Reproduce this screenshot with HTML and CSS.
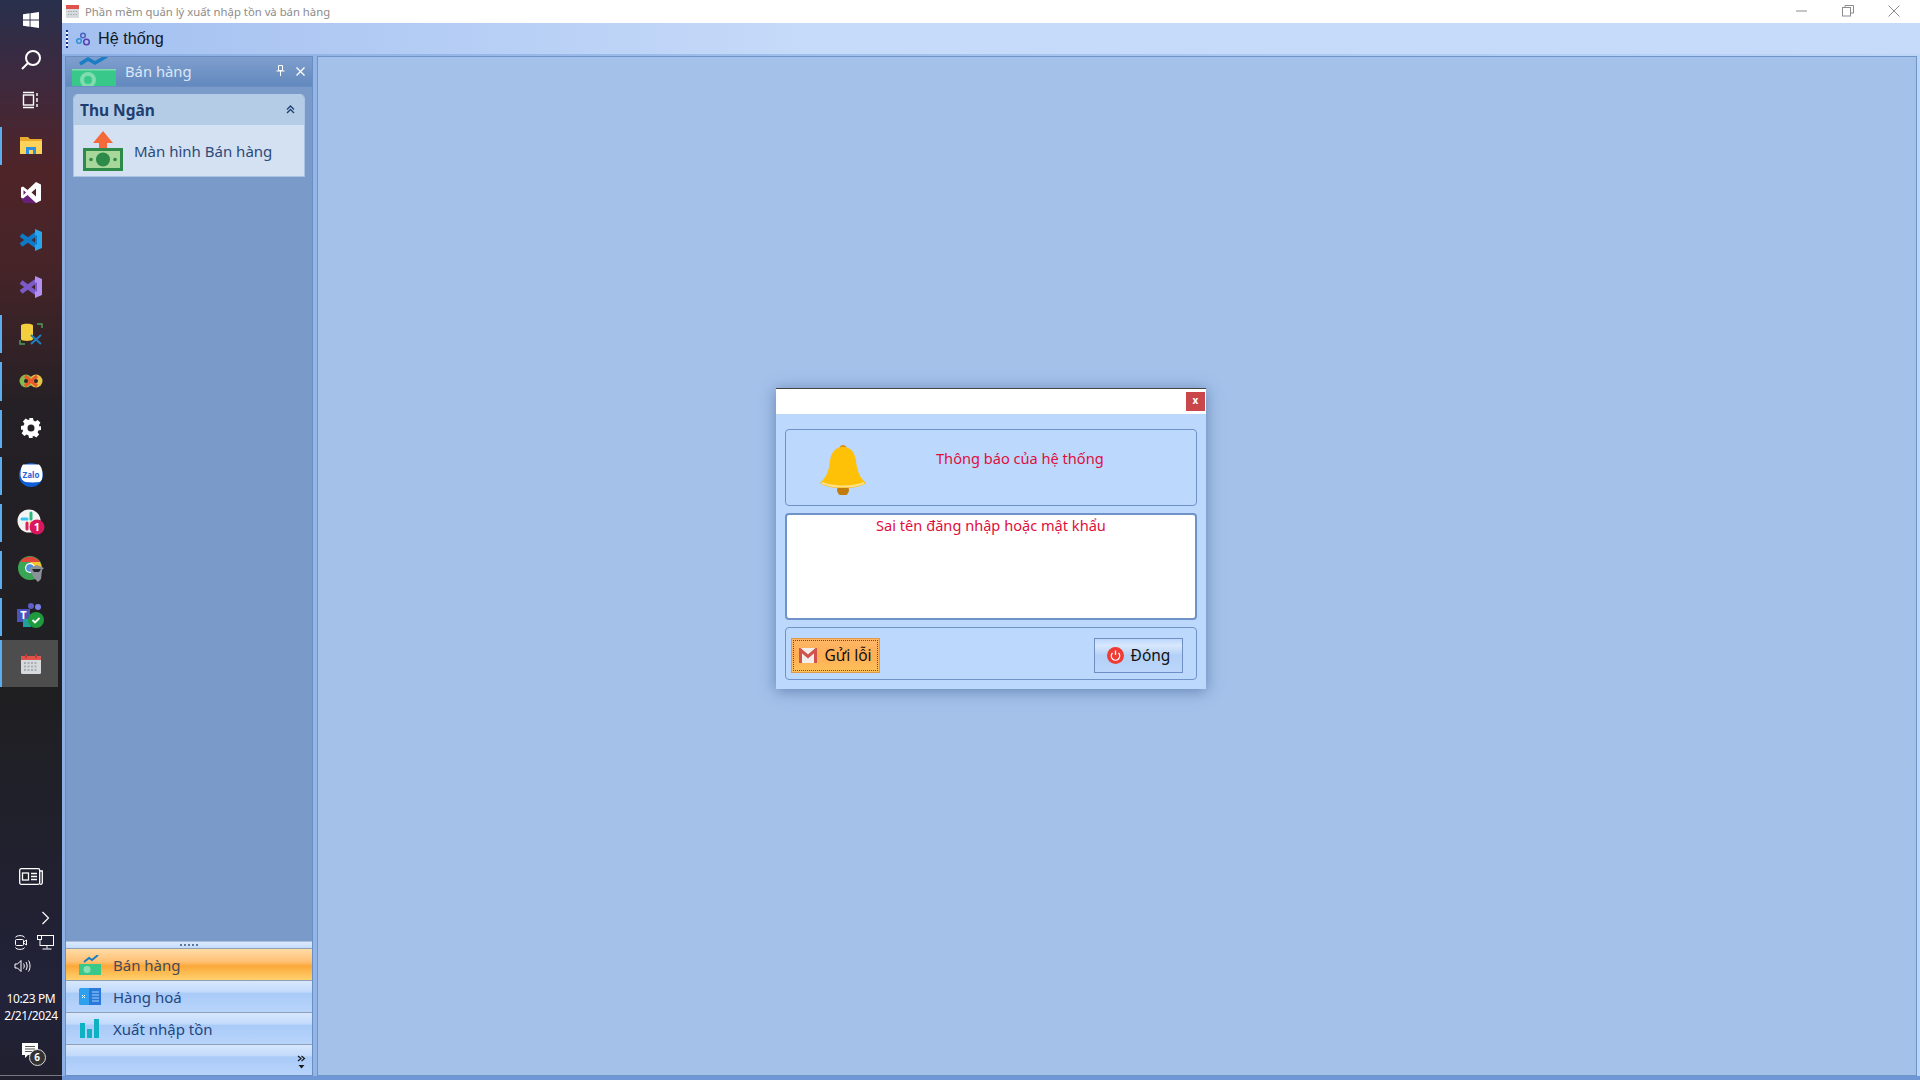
FILE: index.html
```html
<!DOCTYPE html>
<html lang="en">
<head>
  <meta charset="UTF-8" />
  <title>Phần mềm quản lý xuất nhập tồn và bán hàng</title>
  <link rel="stylesheet" href="styles.css">
</head>
<body>

<div class="taskbar">
  <div class="tb-top">
    <div class="tb-sys"><svg width="18" height="18" viewBox="0 0 18 18"><path fill="#fff" d="M1 3.2l6.6-.9v6.2H1zM8.500 2.200L17 1v7.500H8.500zM1 9.500h6.600v6.200L1 14.800zM8.500 9.500H17V17l-8.500-1.200z"/></svg></div>
    <div class="tb-sys"><svg width="22" height="22" viewBox="0 0 22 22" fill="none" stroke="#fff" stroke-width="2"><circle cx="13" cy="9" r="7"/><path d="M8 14l-6 6"/></svg></div>
    <div class="tb-sys"><svg width="18" height="18" viewBox="0 0 18 18" fill="none" stroke="#fff" stroke-width="1.400"><rect x="1.500" y="4" width="10" height="10"/><path d="M1 1.500h11M1 16.500h11M15 2v3M15 7v4M15 13v3"/></svg></div>
  </div>

  <div class="tb-apps">
    <div class="tb-app running"><svg width="22" height="20" viewBox="0 0 22 20"><path fill="#e8a92c" d="M0 1h8l2 2h12v3H0z"/><path fill="#fbd35a" d="M0 5h22v13H0z"/><path fill="#2f8fdc" d="M6 11h10v7H6z"/><path fill="#fbd35a" d="M9 14h4v4H9z"/></svg></div>
    <div class="tb-app"><svg width="22" height="23" viewBox="0 0 22 23"><path fill="#68217a" d="M1 17V7l20 10-4 5H4z"/><path fill="#fff" d="M16 1l5 2.500v16L16 22 7.500 14 3 17.500 1 16.500v-10L3 5.500 7.500 9zM16 7.500l-4.500 4 4.500 4zM3.500 9v5l2.500-2.500z"/></svg></div>
    <div class="tb-app"><svg width="24" height="24" viewBox="0 0 24 24" fill="none"><path stroke="#0e7ac7" stroke-width="4.500" d="M2 7l15 11M2 17L17 6"/><path fill="#29a5ec" d="M16 1l7 3v16l-7 3z"/><path fill="#0e7ac7" d="M16 8l2-1v10l-2-1z"/></svg></div>
    <div class="tb-app"><svg width="24" height="24" viewBox="0 0 24 24" fill="none"><path stroke="#7c5bc9" stroke-width="4.500" d="M2 7l15 11M2 17L17 6"/><path fill="#b28ff0" d="M16 1l7 3v16l-7 3z"/><path fill="#7c5bc9" d="M16 8l2-1v10l-2-1z"/></svg></div>
    <div class="tb-app running"><svg width="24" height="24" viewBox="0 0 24 24"><path fill="#f3cf3d" d="M2 3.500C2 1 14 1 14 3.500V17c0 2.500-12 2.500-12 0z"/><path fill="none" stroke="#4e9a5a" stroke-width="1.500" d="M18 2h5v4M1 18v4h5"/><path fill="none" stroke="#1f7fc0" stroke-width="2" d="M12 13l10 9M22 13l-10 9"/></svg></div>
    <div class="tb-app running"><svg width="24" height="16" viewBox="0 0 24 16"><circle cx="7" cy="8" r="6.500" fill="#89b84d"/><circle cx="17" cy="8" r="6.500" fill="#e7c24a"/><path stroke="#ea5a2a" stroke-width="3.500" d="M6 3l12 10M18 3L6 13"/><circle cx="7" cy="8" r="2" fill="#28262a"/><circle cx="17" cy="8" r="2" fill="#28262a"/></svg></div>
    <div class="tb-app running"><svg width="20" height="20" viewBox="0 0 20 20"><path fill="#fff" fill-rule="evenodd" d="M8 0h4l.5 2.600 1.800.800 2.300-1.500 2.800 2.800-1.500 2.300.800 1.800L20 8v4l-2.600.5-.8 1.800 1.500 2.300-2.800 2.800-2.300-1.500-1.800.800L12 20H8l-.5-2.600-1.800-.8-2.300 1.500-2.800-2.800 1.500-2.300-.8-1.800L0 12V8l2.600-.5.800-1.800-1.500-2.300 2.800-2.800 2.300 1.500 1.800-.8zM10 6.500a3.500 3.500 0 100 7 3.500 3.500 0 000-7z"/></svg></div>
    <div class="tb-app running"><svg width="24" height="24" viewBox="0 0 24 24"><circle cx="12" cy="12" r="12" fill="#0f5fd6"/><path fill="#fff" d="M4 1.500h16c2 1.500 3.500 5 3.500 10 0 4-1 6.500-3 7.500-4 .5-10 .5-14 0-3-1-5-4-5-8 0-4 1-8 2.500-9.500z"/><text class="zalo-text" x="12" y="14.500" text-anchor="middle">Zalo</text></svg></div>
    <div class="tb-app running"><svg width="28" height="26" viewBox="0 0 28 26"><circle cx="12" cy="12" r="11.500" fill="#f1f4f2"/><path stroke="#36c5f0" stroke-width="3" stroke-linecap="round" d="M5 10h5"/><path stroke="#2eb67d" stroke-width="3" stroke-linecap="round" d="M14 4v6"/><path stroke="#e01e5a" stroke-width="3" stroke-linecap="round" d="M10 14v6"/><path stroke="#ecb22e" stroke-width="3" stroke-linecap="round" d="M14 14h5"/><circle cx="20" cy="18" r="7.500" fill="#d8175c"/><text class="badge-text" x="20" y="22" text-anchor="middle">1</text></svg></div>
    <div class="tb-app running"><svg width="26" height="26" viewBox="0 0 26 26"><circle cx="12" cy="12" r="12" fill="#3aa655"/><path fill="#e2453a" d="M2 6a12 12 0 0120 0H12z"/><path fill="#f7c52c" d="M22 6a12 12 0 01-2 14l-5-7 -3-7z"/><circle cx="12" cy="12" r="5" fill="#fff"/><circle cx="12" cy="12" r="3.800" fill="#4a8fe0"/><path fill="#8b9299" d="M11 12l8-3 7 3-2 2-1 9-3 3-4-4z"/><path fill="#22252a" d="M14 13h9l-2 3h-5z"/></svg></div>
    <div class="tb-app running"><svg width="28" height="26" viewBox="0 0 28 26"><circle cx="21" cy="4" r="3" fill="#7b83eb"/><circle cx="14" cy="3" r="3" fill="#5b5fc7"/><rect x="0" y="6" width="13" height="13" fill="#4b53bc"/><rect x="6" y="16" width="8" height="8" fill="#21a0a0"/><text class="teams-text" x="6.500" y="16" text-anchor="middle">T</text><circle cx="19" cy="17" r="8" fill="#1f9a3c"/><path fill="none" stroke="#fff" stroke-width="1.800" d="M15.500 17l2.500 2.500 4.500-4.500"/></svg></div>
    <div class="tb-app running selected"><svg width="20" height="20" viewBox="0 0 20 20"><rect y="2" width="20" height="18" rx="1.500" fill="#d7dadd"/><path fill="#e0534d" d="M0 3.500A1.500 1.500 0 011.500 2h17A1.500 1.500 0 0120 3.500V6H0z"/><path stroke="#c23a36" stroke-width="2" d="M5 0v4M15 0v4"/><path stroke="#a9adb2" stroke-width="2" stroke-dasharray="2 1.500" d="M3 9h14M3 12.500h14M3 16h14"/></svg></div>
  </div>

  <div class="tb-bottom">
    <svg class="tb-news" width="24" height="17" viewBox="0 0 24 17" fill="none" stroke="#fff" stroke-width="1.300"><rect x=".7" y=".7" width="20" height="15.600" rx="1.500"/><path d="M21 3h2.300v12a1.500 1.500 0 01-2.300 1"/><rect x="3.500" y="5" width="6" height="7"/><path d="M12 5.500h6M12 8.500h6M12 11.500h6"/></svg>
    <svg class="tb-chevron" width="9" height="14" viewBox="0 0 9 14" fill="none" stroke="#fff" stroke-width="1.200"><path d="M1.500 1l6 6-6 6"/></svg>
    <div class="tb-tray">
      <svg width="14" height="17" viewBox="0 0 14 17" fill="none" stroke="#fff"><path d="M1.500 3.500C2 1 10 1 10.500 3.500M1.500 13.500c.5 2.500 8.500 2.500 9 0"/><rect x="1.500" y="5.500" width="8" height="6" rx="1"/><path d="M9.500 8l3-2v5l-3-2"/></svg>
      <svg width="17" height="15" viewBox="0 0 17 15" fill="none" stroke="#fff"><rect x="3" y=".5" width="13.500" height="10"/><rect x=".5" y=".5" width="4" height="4" fill="#23233a"/><path d="M10 10.500v3M5.500 14h9"/></svg>
    </div>
    <div class="tb-tray">
      <svg width="17" height="14" viewBox="0 0 17 14" fill="none" stroke="#fff"><path d="M1 5h2.500L7 1.500v11L3.500 9H1z"/><path d="M9.500 4.500c1 1.500 1 3.500 0 5M12 3c1.500 2.500 1.500 5.500 0 8M14.500 1.500c2 3 2 8 0 11"/></svg>
    </div>
    <div class="tb-clock">10:23 PM<br>2/21/2024</div>
    <div class="tb-notify">
      <svg width="17" height="17" viewBox="0 0 17 17"><path fill="#fff" d="M0 0h16v12H6l-3 3v-3H0z"/><path stroke="#555" d="M3 3.500h10M3 6h10M3 8.500h7"/></svg>
      <span class="notify-badge">6</span>
    </div>
  </div>
</div>

<div class="window">
  <div class="titlebar">
    <svg width="13" height="13" viewBox="0 0 13 13"><rect y="1" width="13" height="12" fill="#d7dadd"/><path fill="#e0534d" d="M0 0h13v4H0z"/><path stroke="#a9adb2" stroke-dasharray="1.500 1" d="M2 6.500h9M2 9.500h9"/></svg>
    <span class="title-text">Phần mềm quản lý xuất nhập tồn và bán hàng</span>
    <div class="win-controls">
      <svg width="12" height="12" viewBox="0 0 12 12" stroke="#8c8c8c" fill="none"><path d="M0 6h11"/></svg>
      <svg width="12" height="12" viewBox="0 0 12 12" stroke="#8c8c8c" fill="none"><rect x=".5" y="2.500" width="8" height="8.500"/><path d="M3 2.500V.5h8.500V8H9"/></svg>
      <svg width="12" height="12" viewBox="0 0 12 12" stroke="#8c8c8c" fill="none"><path d="M.5.500l11 11M11.500.5l-11 11"/></svg>
    </div>
  </div>

  <div class="menubar">
    <span class="grip"></span>
    <svg width="16" height="16" viewBox="0 0 16 16" fill="none"><circle cx="8" cy="4.500" r="2.300" stroke="#4b63c0" stroke-width="1.500"/><circle cx="4" cy="10" r="2.300" stroke="#2f8fd8" stroke-width="1.500"/><circle cx="11.500" cy="11" r="2.800" stroke="#5a3fb0" stroke-width="1.500"/></svg>
    <span class="menu-item">Hệ thống</span>
  </div>

  <div class="workspace">
    <div class="sidepanel">
      <div class="panel-head">
        <svg class="head-icon" width="44" height="30" viewBox="0 0 44 30"><path fill="none" stroke="#1b7ec4" stroke-width="3.500" d="M8 8l8-5 7 4 12-7"/><rect x="0" y="13" width="44" height="17" fill="#38c98a"/><rect x="0" y="13" width="44" height="1.500" fill="#7fdcae"/><circle cx="16" cy="24" r="8" fill="#7fdcae"/><circle cx="16" cy="24" r="4" fill="#38c98a"/></svg>
        <span class="panel-title">Bán hàng</span>
        <svg class="head-btn pin" width="9" height="11" viewBox="0 0 9 11" fill="none" stroke="#fff"><path d="M2.500.5h4v5h-4zM.5 6h8M4.500 6v5"/></svg>
        <svg class="head-btn" width="9" height="9" viewBox="0 0 9 9" fill="none" stroke="#fff" stroke-width="1.300"><path d="M.5.500l8 8M8.500.5l-8 8"/></svg>
      </div>
      <div class="panel-body">
        <div class="group">
          <div class="group-head">
            <span>Thu Ngân</span>
            <svg width="9" height="9" viewBox="0 0 9 9" fill="none" stroke="#1d3f70" stroke-width="1.300"><path d="M1 4.500l3.500-3.500 3.500 3.500M1 8l3.500-3.500L8 8"/></svg>
          </div>
          <div class="group-body">
            <svg width="40" height="40" viewBox="0 0 40 40"><path fill="#f4693a" d="M20 0l10 12h-6v9h-8v-9h-6z"/><rect y="17" width="40" height="23" fill="#2d8a48"/><rect x="3" y="20" width="34" height="17" fill="#a7d89a"/><circle cx="20" cy="28.500" r="7" fill="#2d8a48"/><circle cx="8" cy="28.500" r="1.800" fill="#2d8a48"/><circle cx="32" cy="28.500" r="1.800" fill="#2d8a48"/></svg>
            <span>Màn hình Bán hàng</span>
          </div>
        </div>
      </div>
      <div class="nav-splitter"><span></span></div>
      <div class="nav-item active">
        <svg width="22" height="20" viewBox="0 0 22 20"><path fill="none" stroke="#1b7ec4" stroke-width="2" d="M5 7l5-4 3 2 6-5"/><rect y="9" width="22" height="11" fill="#38c98a"/><circle cx="8" cy="14.500" r="3.500" fill="#8adfb4"/></svg>
        <span>Bán hàng</span>
      </div>
      <div class="nav-item">
        <svg width="22" height="18" viewBox="0 0 22 18"><rect width="11" height="17" rx="1.500" fill="#2ea0ee"/><rect x="10" width="12" height="17" fill="#2a78dc"/><path stroke="#9fd4f8" d="M13 4h7M13 7h7M13 10h7M13 13h7"/><path stroke="#fff" d="M3 7l3 3M6 7l-3 3"/></svg>
        <span>Hàng hoá</span>
      </div>
      <div class="nav-item">
        <svg width="20" height="20" viewBox="0 0 20 20"><rect y="4" width="5" height="15" fill="#0fb2c2"/><rect x="7" y="10" width="5" height="9" fill="#0fb2c2"/><rect x="14" y="0" width="5" height="19" fill="#0fb2c2"/></svg>
        <span>Xuất nhập tồn</span>
      </div>
      <div class="nav-overflow">
        <svg width="9" height="14" viewBox="0 0 9 14" fill="none" stroke="#1a1a1a" stroke-width="1.200"><path d="M1 1l3 2.500L1 6M4.500 1l3 2.500L4.500 6"/><path fill="#1a1a1a" stroke="none" d="M1.500 10h6l-3 3.500z"/></svg>
      </div>
    </div>

    <div class="mainarea"></div>
  </div>
  <div class="bottom-edge"></div>
</div>

<!-- message box floats over the main area -->
<div class="dialog">
  <div class="dialog-title"><span class="dialog-close">x</span></div>
  <div class="dialog-body">
    <div class="box box-head">
      <svg width="46" height="50" viewBox="0 0 46 50"><circle cx="23" cy="45" r="6" fill="#c27c0e"/><circle cx="23" cy="3.500" r="3.500" fill="#d9940f"/><path fill="#ffc107" d="M23 2c8 0 12 6 13 14 1 10 4 17 10 22-5 4-13 5-23 5S5 42 0 38c6-5 9-12 10-22C11 8 15 2 23 2z"/><path fill="none" stroke="#ffe08a" stroke-width="2" d="M2 38c6 2.500 13 3.500 21 3.500s15-1 21-3.500"/></svg>
      <span class="box-title">Thông báo của hệ thống</span>
    </div>
    <div class="box box-msg">Sai tên đăng nhập hoặc mật khẩu</div>
    <div class="box box-actions">
      <button class="btn btn-focus">
        <svg width="18" height="15" viewBox="0 0 18 15"><rect width="18" height="15" fill="#f2ede8"/><path fill="none" stroke="#d0524c" stroke-width="3" d="M1.500 15V2l7.500 6.500L16.500 2v13"/></svg>
        <span>Gửi lỗi</span>
      </button>
      <button class="btn">
        <svg width="17" height="17" viewBox="0 0 17 17"><circle cx="8.500" cy="8.500" r="8.500" fill="#ee3b34"/><path fill="none" stroke="#fff" stroke-width="1.300" d="M5.500 6a4.200 4.200 0 106 0M8.500 3.500v4.500"/></svg>
        <span>Đóng</span>
      </button>
    </div>
  </div>
</div>

</body>
</html>
```

FILE: styles.css
```css
html, body {
  margin: 0;
  padding: 0;
  height: 100%;
}
body {
  width: 1920px;
  height: 1080px;
  overflow: hidden;
  display: flex;
  font-family: "Noto Sans", "Open Sans", sans-serif;
  background-color: #a3c1e9;
}
svg {
  display: block;
  flex: none;
}

/* windows taskbar */
.taskbar {
  width: 62px;
  flex: none;
  display: flex;
  flex-direction: column;
  background: linear-gradient(180deg, #28304c 0, #3c2a40 70px, #4f2428 170px, #452428 270px, #242025 410px, #1f1f22 700px, #22223a 1000px, #20202e 1080px);
}
.tb-sys {
  height: 40px;
  display: flex;
  align-items: center;
  justify-content: center;
}
.tb-top {
  height: 122px;
  flex: none;
}
.tb-app {
  height: 47.100px;
  display: flex;
  align-items: center;
  justify-content: center;
  position: relative;
}
.tb-app.running::before {
  content: "";
  position: absolute;
  left: 0;
  top: 5px;
  bottom: 4px;
  width: 2px;
  background: #5aaef0;
}
.tb-app.selected {
  background-color: #4d4d4d;
  width: 58px;
  padding-right: 0;
  margin-right: 4px;
}
.tb-app.selected svg {
  margin-left: 4px;
}
.tb-app.selected::before {
  top: 0;
  bottom: 0;
}
.tb-apps {
  flex: none;
}
.tb-bottom {
  flex: 1;
  display: flex;
  flex-direction: column;
  align-items: center;
  justify-content: flex-end;
  padding-bottom: 15px;
  margin-bottom: 4px;
  border-bottom: 1px solid #77777f;
}
.tb-news {
  margin-bottom: 26px;
}
.tb-chevron {
  align-self: flex-end;
  margin: 0 12px 6px 0;
}
.tb-tray {
  align-self: stretch;
  display: flex;
  gap: 9px;
  padding-left: 14px;
  height: 23px;
  align-items: center;
}
.tb-clock {
  color: #fff;
  font-size: 12px;
  line-height: 17px;
  text-align: center;
  letter-spacing: -0.4px;
  margin-top: 13px;
  margin-bottom: 19px;
  white-space: nowrap;
}
.tb-notify {
  position: relative;
  margin-right: 2px;
}
.notify-badge {
  position: absolute;
  left: 7px;
  top: 6px;
  width: 15px;
  height: 15px;
  border-radius: 50%;
  border: 1px solid #ddd;
  background: #333;
  color: #fff;
  font-size: 10px;
  line-height: 15px;
  text-align: center;
  font-weight: bold;
}
.zalo-text {
  font-size: 8px;
  fill: #2b62d6;
  font-weight: bold;
}
.badge-text {
  font-size: 11px;
  fill: #fff;
  font-weight: bold;
}
.teams-text {
  font-size: 11px;
  fill: #fff;
  font-weight: bold;
}

/* app window */
.window {
  flex: 1;
  display: flex;
  flex-direction: column;
  min-width: 0;
}
.titlebar {
  height: 23px;
  background: #fff;
  display: flex;
  align-items: center;
  padding-left: 4px;
  gap: 6px;
  flex: none;
}
.title-text {
  font-size: 11.300px;
  color: #8c8c8c;
}
.win-controls {
  margin-left: auto;
  display: flex;
  gap: 34px;
  padding: 0 20px 2px 0;
}
.menubar {
  height: 31px;
  flex: none;
  display: flex;
  align-items: center;
  background: linear-gradient(90deg, #a3c0f0 0, #c6daf9 40%, #c6daf9 100%);
}
.grip {
  width: 2px;
  height: 18px;
  margin: 0 7px 0 4px;
  background: repeating-linear-gradient(180deg, #1b2f80 0 2px, #fff 2px 4px);
}
.menu-item {
  font-family: "Liberation Sans", Arial, sans-serif;
  font-size: 16.200px;
  margin-left: 7px;
  color: #101828;
}
.workspace {
  flex: 1;
  display: flex;
  gap: 4px;
  padding: 2px 3px 0 3px;
  background: linear-gradient(90deg, #8cb0e4 0, #bcd6f8 100%);
  min-height: 0;
}
.bottom-edge {
  height: 4px;
  flex: none;
  background: #6f97d6;
}

/* left panel */
.sidepanel {
  width: 248px;
  flex: none;
  display: flex;
  flex-direction: column;
  background: #7a9bc9;
  box-sizing: border-box;
  border: 1px solid #6a8dc2;
}
.panel-head {
  height: 30px;
  box-sizing: border-box;
  flex: none;
  display: flex;
  align-items: flex-end;
  overflow: hidden;
  padding: 0 7px 0 6px;
  background: linear-gradient(180deg, #7f9fce 0, #6288bd 100%);
  border-bottom: 1px solid #6a8dc2;
}
.panel-title {
  font-size: 14.800px;
  color: #dbe7f8;
  margin: 0 auto 5px 9px;
}
.head-btn {
  margin: 0 0 10px 11px;
}
.head-btn.pin {
  margin-left: 13px;
}
.panel-body {
  flex: 1;
  padding: 7px 7px;
}
.group {
  border-radius: 5px 5px 0 0;
  border: 1px solid #a9c3e3;
  border-top: 0;
  overflow: hidden;
}
.group-head {
  height: 31px;
  display: flex;
  align-items: center;
  justify-content: space-between;
  padding: 0 9px 0 6px;
  background: #b5cce6;
  color: #1d3f70;
  font-size: 15.500px;
  font-weight: bold;
}
.group-body {
  height: 51px;
  display: flex;
  align-items: center;
  gap: 11px;
  padding-left: 9px;
  background: #d3e1f2;
  color: #2c4a78;
  font-size: 15px;
}
.nav-splitter {
  height: 6px;
  flex: none;
  display: flex;
  justify-content: center;
  align-items: center;
  background: linear-gradient(180deg, #dcebfe, #c3dbfb);
  border-top: 1px solid #a9bfdc;
  border-bottom: 1px solid #8f9fb5;
}
.nav-splitter span {
  width: 18px;
  height: 2px;
  background: repeating-linear-gradient(90deg, #5c77a0 0 2px, transparent 2px 4px);
}
.nav-item {
  height: 32px;
  box-sizing: border-box;
  flex: none;
  display: flex;
  align-items: center;
  padding-left: 13px;
  gap: 12px;
  color: #24477e;
  font-size: 15px;
  background: linear-gradient(180deg, #d8e8fd 0, #c2dafb 35%, #a9cbf8 40%, #b8d4fb 100%);
  border-bottom: 1px solid #8f9fb5;
}
.nav-item svg {
  width: 22px;
}
.nav-item.active {
  color: #454b58;
  background: linear-gradient(180deg, #ffdca6 0, #ffc176 40%, #fca83a 55%, #ffd16e 100%);
}
.nav-overflow {
  flex: none;
  height: 30px;
  display: flex;
  justify-content: flex-end;
  align-items: flex-end;
  padding: 0 6px 6px 0;
  box-sizing: border-box;
  background: linear-gradient(180deg, #d8e8fd 0, #c2dafb 35%, #a9cbf8 40%, #b8d4fb 100%);
}
.mainarea {
  flex: 1;
  background: #a3c1e9;
  border: 1px solid #6f95c8;
  box-sizing: border-box;
}

/* message box */
.dialog {
  position: absolute;
  left: 776px;
  top: 388px;
  width: 430px;
  height: 301px;
  box-sizing: border-box;
  background: #bcd8fc;
  border-top: 1px solid #444;
  box-shadow: 0 2px 14px rgba(50, 80, 130, 0.55);
  display: flex;
  flex-direction: column;
}
.dialog-title {
  height: 25px;
  flex: none;
  background: #fff;
  display: flex;
  justify-content: flex-end;
  align-items: flex-start;
}
.dialog-close {
  width: 19px;
  height: 19px;
  margin: 3px 1px 0 0;
  background: #c9474a;
  color: #fff;
  font-size: 10px;
  font-weight: bold;
  line-height: 17px;
  text-align: center;
}
.dialog-body {
  flex: 1;
  padding: 15px 9px 9px;
  display: flex;
  flex-direction: column;
  gap: 7px;
}
.box {
  box-sizing: border-box;
  border: 1px solid #6f93c9;
  border-radius: 4px;
}
.box-head {
  height: 77px;
  flex: none;
  display: flex;
  align-items: flex-start;
  padding: 15px 0 0 34px;
}
.box-title {
  color: #df0f3c;
  font-size: 14.600px;
  margin: 3px 0 0 70px;
}
.box-msg {
  height: 107px;
  flex: none;
  background: #fff;
  color: #df0f3c;
  font-size: 14.600px;
  text-align: center;
  padding-top: 0;
  border-width: 2px;
}
.box-actions {
  flex: 1;
  display: flex;
  justify-content: space-between;
  align-items: center;
  padding: 3px 13px 0 5px;
}
.btn {
  width: 89px;
  height: 35px;
  box-sizing: border-box;
  display: flex;
  align-items: center;
  justify-content: center;
  gap: 7px;
  padding: 0;
  border: 1px solid #6f8fc2;
  background: linear-gradient(180deg, #bcd8fc 0, #d8e8fd 20%, #b4d0f6 50%, #bcd6fb 100%);
  font-family: "Noto Sans", "Open Sans", sans-serif;
  font-size: 15.500px;
  color: #111;
}
.btn-focus {
  border-color: #dc9a4a;
  background: linear-gradient(180deg, #ffb766 0, #ffae55 50%, #ffc15a 100%);
  outline: 1px dotted #6a4a20;
  outline-offset: -3px;
}
```
